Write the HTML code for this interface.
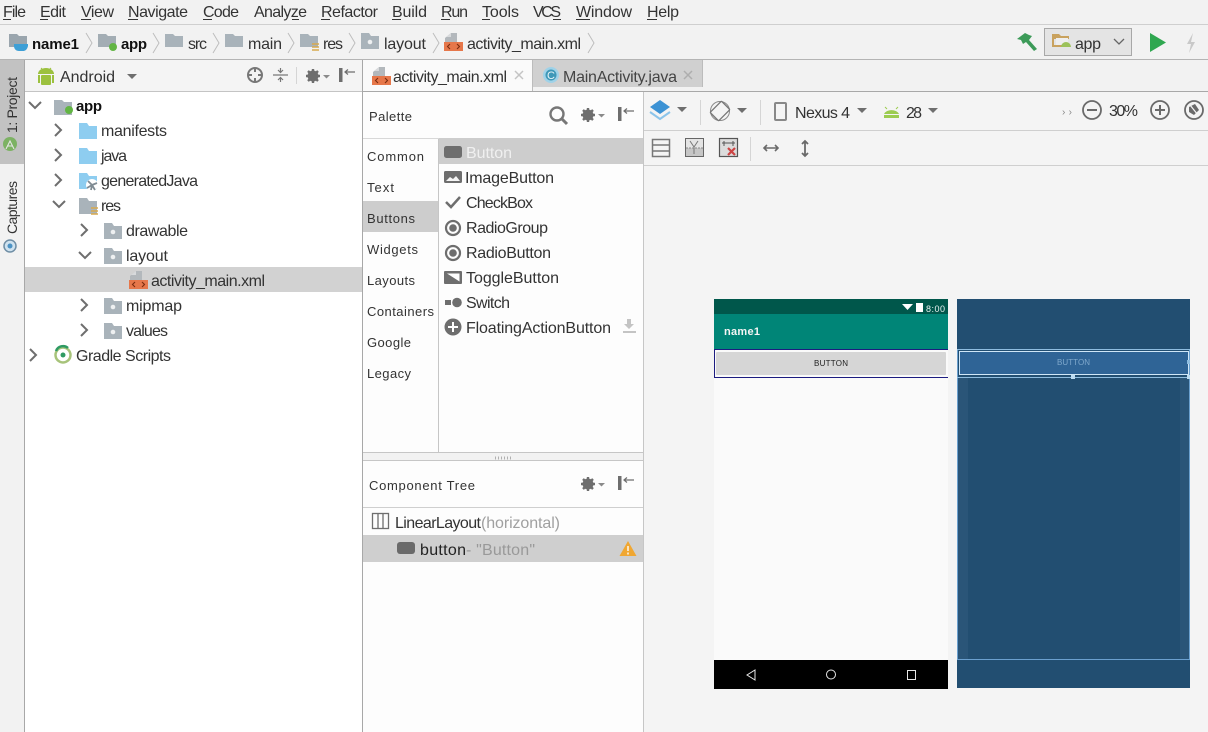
<!DOCTYPE html>
<html><head><meta charset="utf-8"><style>
html,body{margin:0;padding:0;background:#f2f2f2;width:1208px;height:732px;overflow:hidden}
svg{display:block}
text{font-family:"Liberation Sans","Noto Sans CJK KR",sans-serif;font-size:16px;fill:#333}
.b{font-weight:bold;fill:#111;font-size:15px}
.s{font-size:13px}
.g{fill:#a0a0a0}
</style></head><body>
<svg width="1208" height="732" viewBox="0 0 1208 732" xmlns="http://www.w3.org/2000/svg">
<defs>
<g id="fold"><path d="M0 0h8l2 3h8v13H0z"/></g>
<g id="resfold"><path d="M0 0h8l2 3h8v13H0z" fill="#a9b3ba"/><circle cx="9" cy="9" r="2.300" fill="#eef0f1"/></g>
<g id="xml"><path d="M6 0l6 0v9H0V5z" fill="#b3b8bc"/><path d="M6 0v4H1" fill="#d8dadc"/><rect x="-1" y="9" width="19" height="9" fill="#e6774a"/><path d="M5 11l-2.500 2.500 2.500 2.500M12 11l2.500 2.500-2.500 2.500" stroke="#7a2c10" stroke-width="1.100" fill="none"/></g>
<path id="chevR" d="M0 0l6 6-6 6" fill="none" stroke="#6e6e6e" stroke-width="2"/>
<path id="chevD" d="M0 0l6 6 6-6" fill="none" stroke="#6e6e6e" stroke-width="2"/>
<path id="crumb" d="M0 0l6 10-6 10" fill="none" stroke="#bdbdbd" stroke-width="1"/>
<g id="gear"><circle cx="7" cy="7" r="5.500" fill="#6e6e6e"/><circle cx="7" cy="7" r="1.800" fill="#f5f5f5"/><path d="M7 0v14M0 7h14M2 2l10 10M12 2L2 12" stroke="#6e6e6e" stroke-width="2.400"/><path d="M17 6h7l-3.500 3.500z" fill="#8a8a8a"/></g>
<g id="pin"><rect x="0" y="0" width="3.500" height="14" fill="#6e6e6e"/><path d="M16 4H6M9 1.500L6 4l3 2.500" stroke="#6e6e6e" stroke-width="1.200" fill="none"/></g>
<path id="drop" d="M0 0h10l-5 5z" fill="#6e6e6e"/>
<g id="radio"><circle cx="8" cy="8" r="7" fill="none" stroke="#6e6e6e" stroke-width="2.200"/><circle cx="8" cy="8" r="3.800" fill="#6e6e6e"/></g>
</defs>

<rect width="1208" height="732" fill="#f2f2f2"/>

<!-- menu -->
<rect x="0" y="24" width="1208" height="1" fill="#cfcfcf"/>
<text x="3" y="17" textLength="23">File</text>
<text x="40" y="17" textLength="26">Edit</text>
<text x="81" y="17" textLength="33">View</text>
<text x="128" y="17" textLength="60">Navigate</text>
<text x="203" y="17" textLength="36">Code</text>
<text x="254" y="17" textLength="53">Analyze</text>
<text x="321" y="17" textLength="57">Refactor</text>
<text x="392" y="17" textLength="35">Build</text>
<text x="441" y="17" textLength="27">Run</text>
<text x="482" y="17" textLength="37">Tools</text>
<text x="533" y="17" textLength="28">VCS</text>
<text x="576" y="17" textLength="56">Window</text>
<text x="647" y="17" textLength="32">Help</text>
<path d="M3 19.500h8M40 19.500h8M81 19.500h10M128 19.500h10M203 19.500h9M292 19.500h7M321 19.500h9M392 19.500h9M441 19.500h9M482 19.500h8M553 19.500h8M576 19.500h14M647 19.500h10" stroke="#333" stroke-width="1"/>

<!-- breadcrumb -->
<rect x="0" y="59" width="1208" height="1" fill="#b4b4b4"/>
<path d="M9 34h8l2 2h8v11H9z" fill="#9aa5ad"/><path d="M14 44h14v2c-1 4-3 5-5 5h-4c-3 0-5-2-5-5z" fill="#3d9fd6"/>
<text class="b" x="32" y="49" textLength="47">name1</text>
<use href="#crumb" x="86" y="33"/>
<path d="M98 34h8l2 2h8v11H98z" fill="#a3adb4"/><circle cx="113" cy="47" r="4" fill="#62b543"/>
<text class="b" x="121" y="49" textLength="26">app</text>
<use href="#crumb" x="153" y="33"/>
<path d="M165 34h8l2 2h8v11h-18z" fill="#a9b3ba"/>
<text x="188" y="49" textLength="19">src</text>
<use href="#crumb" x="213" y="33"/>
<path d="M225 34h8l2 2h8v11h-18z" fill="#a9b3ba"/>
<text x="248" y="49" textLength="34">main</text>
<use href="#crumb" x="288" y="33"/>
<path d="M300 34h8l2 2h8v11h-18z" fill="#a9b3ba"/><path d="M312 44h7M312 47h7M312 50h7" stroke="#d8a94e" stroke-width="1.500"/>
<text x="323" y="49" textLength="20">res</text>
<use href="#crumb" x="349" y="33"/>
<use href="#resfold" transform="translate(361,33)"/>
<text x="384" y="49" textLength="42">layout</text>
<use href="#crumb" x="433" y="33"/>
<use href="#xml" transform="translate(445,33)"/>
<text x="467" y="49" textLength="114">activity_main.xml</text>
<use href="#crumb" x="588" y="33"/>

<!-- right run toolbar -->
<path d="M1017 39l8-6 4 2 3 1-3 4 8 9-3 2-8-9-3 2-2-4z" fill="#3c9a58"/>
<rect x="1044.500" y="28.500" width="87" height="27" fill="#e4e4e4" stroke="#a8a8a8"/>
<path d="M1052 34h7l2 2h8v3h-17z" fill="#c9a25e"/><path d="M1052 36h2v9h10v2h-12z" fill="#c9a25e"/><path d="M1056 38h12v7h-12z" fill="#eee"/><path d="M1061 47a5 5 0 0 1 10 0z" fill="#9cc25a"/>
<text x="1075" y="49" textLength="26">app</text>
<path d="M1114 39l5 5 5-5" fill="none" stroke="#666" stroke-width="1.300"/>
<path d="M1150 33l16 9.500-16 9.500z" fill="#2fa750"/>
<path d="M1193 33l-6 11h4l-2 9 6-11h-4z" fill="#c9c9c9"/>

<!-- left strip -->
<rect x="0" y="60" width="24" height="672" fill="#f2f2f2"/>
<rect x="0" y="60" width="24" height="104" fill="#c2c2c2"/>
<rect x="24" y="60" width="1" height="672" fill="#a8a8a8"/>
<text style="font-size:14px" transform="translate(17,133) rotate(-90)" x="0" y="0" textLength="56">1: Project</text>
<circle cx="10" cy="144" r="7" fill="#7cb263"/><path d="M6 149l4-8 4 8M7 146h6" stroke="#e5e5e5" stroke-width="1.100" fill="none"/>
<text style="font-size:14px" transform="translate(17,234) rotate(-90)" x="0" y="0" textLength="53">Captures</text>
<circle cx="10" cy="246" r="6" fill="#cfe2ef" stroke="#6f8ea5" stroke-width="1.500"/><circle cx="10" cy="246" r="2.500" fill="#4b92c4"/>

<!-- project panel -->
<rect x="25" y="60" width="337" height="31" fill="#f4f4f4"/>
<rect x="25" y="91" width="338" height="1" fill="#c4c4c4"/>
<rect x="25" y="92" width="337" height="640" fill="#fff"/>
<rect x="362" y="60" width="1" height="672" fill="#a8a8a8"/>
<path d="M38 74a8 6 0 0 1 16 0z" fill="#9cc13f"/><rect x="41" y="75" width="10" height="10" rx="1" fill="#9cc13f"/><rect x="38" y="75" width="2" height="8" fill="#9cc13f"/><rect x="52" y="75" width="2" height="8" fill="#9cc13f"/><path d="M41 68l2 2M51 68l-2 2" stroke="#9cc13f"/>
<text x="60" y="82" textLength="55">Android</text>
<use href="#drop" x="127" y="74"/>
<circle cx="255" cy="75" r="7" fill="none" stroke="#777" stroke-width="2"/><path d="M255 68v4M255 78v4M248 75h4M258 75h4" stroke="#777" stroke-width="2"/>
<path d="M273 75h15M280.500 68v4M280.500 82v-4M278 70l2.500 2.500 2.500-2.500M278 80l2.500-2.500 2.500 2.500" stroke="#777" stroke-width="1.200" fill="none"/>
<rect x="296" y="67" width="1" height="17" fill="#d5d5d5"/>
<use href="#gear" transform="translate(306,69)"/>
<use href="#pin" transform="translate(339,68)"/>

<use href="#chevD" x="29" y="102"/>
<path d="M54 100h8l2 2h8v13H54z" fill="#a9b3ba"/><circle cx="69" cy="110" r="4" fill="#62b543"/>
<text class="b" x="76" y="111" textLength="26">app</text>
<use href="#chevR" x="55" y="124"/>
<use href="#fold" x="79" y="123" fill="#8ecdf0"/>
<text x="101" y="136" textLength="66">manifests</text>
<use href="#chevR" x="55" y="149"/>
<use href="#fold" x="79" y="148" fill="#8ecdf0"/>
<text x="101" y="161" textLength="26">java</text>
<use href="#chevR" x="55" y="174"/>
<use href="#fold" x="79" y="173" fill="#8ecdf0"/>
<circle cx="92" cy="185" r="6" fill="#fff"/><path d="M92 185l-4-4M92 185l5-2M92 185l-1 5M92 185l-5 3M92 185l3 5" stroke="#7f8b93" stroke-width="1.800"/>
<text x="101" y="186" textLength="97">generatedJava</text>
<use href="#chevD" x="53" y="201"/>
<use href="#fold" x="79" y="198" fill="#a9b3ba"/><path d="M91 208h7M91 211h7M91 214h7" stroke="#d8a94e" stroke-width="1.500"/>
<text x="101" y="211" textLength="20">res</text>
<use href="#chevR" x="81" y="224"/>
<use href="#resfold" transform="translate(104,223)"/>
<text x="126" y="236" textLength="62">drawable</text>
<use href="#chevD" x="79" y="252"/>
<use href="#resfold" transform="translate(104,248)"/>
<text x="126" y="261" textLength="42">layout</text>
<rect x="25" y="267" width="337" height="25" fill="#d2d2d2"/>
<use href="#xml" transform="translate(130,271)"/>
<text x="151" y="286" textLength="114">activity_main.xml</text>
<use href="#chevR" x="81" y="299"/>
<use href="#resfold" transform="translate(104,298)"/>
<text x="126" y="311" textLength="56">mipmap</text>
<use href="#chevR" x="81" y="324"/>
<use href="#resfold" transform="translate(104,323)"/>
<text x="126" y="336" textLength="42">values</text>
<use href="#chevR" x="30" y="349"/>
<circle cx="63" cy="355" r="7.500" fill="none" stroke="#a7c37a" stroke-width="2.500"/><path d="M56 351a7.500 7.500 0 0 1 12-3" fill="none" stroke="#2e9a63" stroke-width="2.500"/><circle cx="63" cy="355" r="2.500" fill="#2e9a63"/>
<text x="76" y="361" textLength="95">Gradle Scripts</text>

<!-- editor tabs -->
<rect x="363" y="60" width="845" height="31" fill="#f2f2f2"/>
<rect x="363" y="60" width="170" height="31" fill="#fafafa"/>
<rect x="533" y="60" width="170" height="27" fill="#d0d0d0"/>
<rect x="532" y="60" width="1" height="31" fill="#bcbcbc"/>
<rect x="702" y="60" width="1" height="27" fill="#bcbcbc"/>
<rect x="363" y="91" width="845" height="1" fill="#a8a8a8"/>
<use href="#xml" transform="translate(373,67)"/>
<text x="393" y="82" textLength="114">activity_main.xml</text>
<path d="M515 71l8 8M523 71l-8 8" stroke="#c4c4c4" stroke-width="1.500"/>
<circle cx="551" cy="75" r="8" fill="#9fd2e8"/><circle cx="551" cy="75" r="5.500" fill="#3e98b8"/>
<text x="547" y="79" style="font-size:11px;fill:#e8f4f8" textLength="8">C</text>
<text x="563" y="82" textLength="114" style="fill:#444">MainActivity.java</text>
<path d="M684 71l8 8M692 71l-8 8" stroke="#aeaeae" stroke-width="1.500"/>

<!-- palette -->
<rect x="363" y="92" width="280" height="640" fill="#fdfdfd"/>
<rect x="643" y="92" width="1" height="640" fill="#c6c6c6"/>
<rect x="363" y="138" width="280" height="1" fill="#d8d8d8"/>
<rect x="438" y="139" width="1" height="313" fill="#c6c6c6"/>
<text class="s" x="369" y="121" textLength="43">Palette</text>
<circle cx="557" cy="114" r="6.500" fill="none" stroke="#777" stroke-width="2.400"/><path d="M562 119l5 5" stroke="#777" stroke-width="3"/>
<use href="#gear" transform="translate(581,108)"/>
<use href="#pin" transform="translate(618,107)"/>
<rect x="363" y="201" width="75" height="31" fill="#cdcdcd"/>
<text class="s" x="367" y="161" textLength="57">Common</text>
<text class="s" x="367" y="192" textLength="27">Text</text>
<text class="s" x="367" y="223" textLength="48">Buttons</text>
<text class="s" x="367" y="254" textLength="51">Widgets</text>
<text class="s" x="367" y="285" textLength="48">Layouts</text>
<text class="s" x="367" y="316" textLength="67">Containers</text>
<text class="s" x="367" y="347" textLength="44">Google</text>
<text class="s" x="367" y="378" textLength="44">Legacy</text>

<rect x="439" y="138" width="204" height="26" fill="#cdcdcd"/>
<rect x="444" y="146" width="18" height="12" rx="2.500" fill="#6e6e6e"/>
<text x="466" y="158" textLength="46" style="fill:#f0f0f0">Button</text>
<rect x="444" y="171" width="18" height="12" rx="1.500" fill="#6e6e6e"/><path d="M446 181l4-4 3 2 3-3 4 5z" fill="#f5f5f5"/>
<text x="465" y="183" textLength="89">ImageButton</text>
<path d="M446 202l5 5 9-10" fill="none" stroke="#6e6e6e" stroke-width="2.500"/>
<text x="466" y="208" textLength="67">CheckBox</text>
<use href="#radio" transform="translate(445,220)"/>
<text x="466" y="233" textLength="82">RadioGroup</text>
<use href="#radio" transform="translate(445,245)"/>
<text x="466" y="258" textLength="85">RadioButton</text>
<rect x="444" y="271" width="18" height="13" rx="1" fill="#6e6e6e"/><path d="M446.500 273.500l13 0 0 8.500z" fill="#6e6e6e"/><path d="M446.500 273.500v0l13 8.500h-13z" fill="#6e6e6e"/><path d="M447 273.500h12.500v8z" fill="#fdfdfd" transform="rotate(0)"/>
<text x="466" y="283" textLength="93">ToggleButton</text>
<rect x="445" y="300" width="6" height="5" fill="#6e6e6e"/><circle cx="457" cy="302.500" r="4.800" fill="#6e6e6e"/>
<text x="466" y="308" textLength="44">Switch</text>
<circle cx="453" cy="327" r="8.500" fill="#6e6e6e"/><path d="M453 322v10M448 327h10" stroke="#fff" stroke-width="2"/>
<text x="466" y="333" textLength="145">FloatingActionButton</text>
<path d="M627 319h4v5h3l-5 5-5-5h3z" fill="#c4c4c4"/><rect x="623" y="331" width="13" height="2" fill="#c4c4c4"/>

<rect x="363" y="452" width="280" height="1" fill="#c6c6c6"/>
<rect x="363" y="453" width="280" height="8" fill="#f2f2f2"/>
<rect x="363" y="460" width="280" height="1" fill="#c6c6c6"/>
<path d="M495 458h17" stroke="#b0b0b0" stroke-width="3" stroke-dasharray="1 2"/>

<!-- component tree -->
<text class="s" x="369" y="490" textLength="106">Component Tree</text>
<use href="#gear" transform="translate(581,477)"/>
<use href="#pin" transform="translate(618,476)"/>
<rect x="363" y="507" width="280" height="1" fill="#cfcfcf"/>
<rect x="372.500" y="513.500" width="16" height="15" fill="none" stroke="#6e6e6e" stroke-width="1.300"/><path d="M378 514v14M383 514v14" stroke="#6e6e6e" stroke-width="1.300"/>
<text x="395" y="528" textLength="86">LinearLayout</text>
<text class="g" x="481" y="528" textLength="79">(horizontal)</text>
<rect x="363" y="535" width="280" height="27" fill="#cfcfcf"/>
<rect x="397" y="542" width="18" height="12" rx="3" fill="#6a6a6a"/>
<text x="420" y="555" textLength="46" style="fill:#222">button</text>
<text class="g" x="466" y="555" textLength="69" style="fill:#999">- "Button"</text>
<path d="M628 541l8.500 15h-17z" fill="#f0a732"/><path d="M628 546v5M628 552.500v2" stroke="#fff" stroke-width="1.400"/>

<!-- design toolbar -->
<rect x="644" y="92" width="564" height="640" fill="#f4f4f4"/>
<rect x="644" y="130" width="564" height="1" fill="#cfcfcf"/>
<rect x="644" y="165" width="564" height="1" fill="#cfcfcf"/>
<path d="M660 100l10 7-10 7-10-7z" fill="#3c92d4"/><path d="M650 112l10 7 10-7" fill="none" stroke="#8cc4ea" stroke-width="2"/>
<use href="#drop" x="677" y="107"/>
<rect x="700" y="100" width="1" height="25" fill="#d5d5d5"/>
<circle cx="720" cy="111" r="9.500" fill="none" stroke="#8a8a8a" stroke-width="1"/><rect x="714" y="103" width="12" height="16" rx="1" transform="rotate(45 720 111)" fill="#f4f4f4" stroke="#777" stroke-width="1.300"/>
<use href="#drop" x="737" y="108"/>
<rect x="760" y="100" width="1" height="25" fill="#d5d5d5"/>
<rect x="775" y="103" width="11" height="17" rx="1" fill="none" stroke="#888" stroke-width="2"/>
<text x="795" y="118" textLength="55">Nexus 4</text>
<use href="#drop" x="857" y="108"/>
<path d="M884 114a8 6 0 0 1 15 0z M884 115h15v3h-15z" fill="#9ccc50"/><path d="M885 107l2 2M898 107l-2 2" stroke="#9ccc50"/>
<text x="906" y="118" textLength="16">28</text>
<use href="#drop" x="928" y="108"/>
<text x="1062" y="115" textLength="10" style="font-size:10px;fill:#888">››</text>
<circle cx="1092" cy="110" r="9" fill="none" stroke="#6a6a6a" stroke-width="1.800"/><path d="M1087 110h10" stroke="#6a6a6a" stroke-width="2"/>
<text x="1109" y="116" textLength="29">30%</text>
<circle cx="1160" cy="110" r="9" fill="none" stroke="#6a6a6a" stroke-width="1.800"/><path d="M1155 110h10M1160 105v10" stroke="#6a6a6a" stroke-width="2"/>
<circle cx="1194" cy="110" r="9" fill="none" stroke="#6a6a6a" stroke-width="1.800"/><path d="M1189 107l6-3 4 6-5 5-5-3z" fill="#6a6a6a"/><path d="M1190 105l8 10" stroke="#f4f4f4" stroke-width="1.200"/>

<rect x="652.500" y="139.500" width="17" height="17" fill="none" stroke="#777" stroke-width="1.500"/><path d="M653 145h16M653 151h16" stroke="#777" stroke-width="1.500"/>
<rect x="685.500" y="138.500" width="18" height="18" fill="#e4e4e4" stroke="#666" stroke-width="1"/><rect x="686" y="148" width="17" height="8" fill="#c6c6c6"/><path d="M690 141l4 6 4-6M694 147v7" stroke="#777" stroke-width="1" fill="none"/><path d="M686 148h17" stroke="#888" stroke-width="1" stroke-dasharray="2 1"/>
<rect x="719.500" y="138.500" width="18" height="18" fill="#dcdcdc" stroke="#555" stroke-width="1.200"/><path d="M722 143h13M724 141v5M733 141v5" stroke="#555"/><path d="M728 148l7 7M735 148l-7 7" stroke="#cc4444" stroke-width="2.200"/>
<rect x="750" y="137" width="1" height="24" fill="#d5d5d5"/>
<path d="M764 148h14M767 145l-3 3 3 3M775 145l3 3-3 3" stroke="#6a6a6a" stroke-width="1.600" fill="none"/>
<path d="M805 141v15M802 144l3-3 3 3M802 153l3 3 3-3" stroke="#6a6a6a" stroke-width="1.800" fill="none"/>

<!-- device -->
<rect x="714" y="299" width="234" height="390" fill="#fafafa"/>
<rect x="714" y="299" width="234" height="15" fill="#00574b"/>
<rect x="714" y="314" width="234" height="35" fill="#008577"/>
<path d="M902 304h11l-5.500 6z" fill="#fff"/><rect x="916" y="303" width="7" height="9" fill="#fff"/>
<text x="926" y="312" textLength="19" style="font-size:9px;fill:#e8f2f0">8:00</text>
<text class="b" x="724" y="335" textLength="36" style="font-size:11px;fill:#f5f5f5">name1</text>
<rect x="714" y="349" width="234" height="29" fill="#fafafa"/>
<path d="M948 349.500H714.500v28H948" fill="none" stroke="#1c1c80" stroke-width="1"/>
<rect x="716" y="352" width="230" height="23" rx="1" fill="#d6d6d6"/>
<text x="814" y="366" textLength="34" style="font-size:8px;fill:#222">BUTTON</text>
<rect x="714" y="660" width="234" height="29" fill="#000"/>
<path d="M755 670v10l-8-5z" fill="none" stroke="#e8e8e8" stroke-width="1"/>
<circle cx="831" cy="674.500" r="4.500" fill="none" stroke="#e8e8e8" stroke-width="1"/>
<rect x="907.500" y="670.500" width="8" height="9" fill="none" stroke="#e8e8e8" stroke-width="1"/>

<!-- blueprint -->
<rect x="957" y="299" width="233" height="389" fill="#224e71"/>
<rect x="958" y="378" width="10" height="281" fill="#2a5578"/>
<rect x="1180" y="378" width="10" height="281" fill="#2a5578"/>
<rect x="957.500" y="349.500" width="232" height="310" fill="none" stroke="#6ba0cf" stroke-width="1"/>
<rect x="957" y="349" width="233" height="1" fill="#8fbde0"/>
<rect x="957" y="377" width="233" height="1" fill="#8fbde0"/>
<rect x="959.500" y="351.500" width="229" height="23" fill="#2f6496" stroke="#cfe6f7" stroke-width="1"/>
<text x="1057" y="365" textLength="33" style="font-size:8px;fill:#7fa8cc">BUTTON</text>
<rect x="1071" y="375" width="4" height="4" fill="#bcdcf2"/>
<rect x="1187" y="375" width="3" height="4" fill="#bcdcf2"/>
<rect x="1187" y="360" width="3" height="4" fill="#8fbde0"/>
</svg>
</body></html>
